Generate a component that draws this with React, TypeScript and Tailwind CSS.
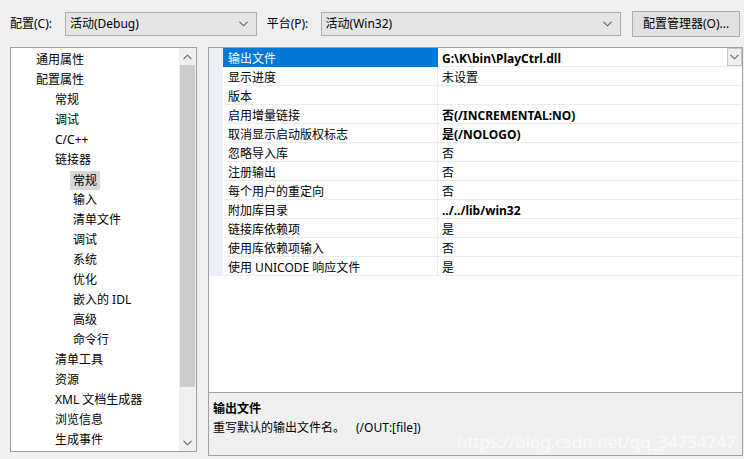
// 链接器 > 常规 属性页（VS 风格）。左侧树 + 右侧属性网格 + 底部说明栏。
import React from "react";

const FONT = { fontFamily: '"Noto Sans", "Noto Sans CJK SC", sans-serif' };

type TreeItem = { label: string; level: 0 | 1 | 2; selected?: boolean };

const tree: TreeItem[] = [
  { label: "通用属性", level: 0 },
  { label: "配置属性", level: 0 },
  { label: "常规", level: 1 },
  { label: "调试", level: 1 },
  { label: "C/C++", level: 1 },
  { label: "链接器", level: 1 },
  { label: "常规", level: 2, selected: true },
  { label: "输入", level: 2 },
  { label: "清单文件", level: 2 },
  { label: "调试", level: 2 },
  { label: "系统", level: 2 },
  { label: "优化", level: 2 },
  { label: "嵌入的 IDL", level: 2 },
  { label: "高级", level: 2 },
  { label: "命令行", level: 2 },
  { label: "清单工具", level: 1 },
  { label: "资源", level: 1 },
  { label: "XML 文档生成器", level: 1 },
  { label: "浏览信息", level: 1 },
  { label: "生成事件", level: 1 },
];

type Prop = { name: string; value: string; bold?: boolean };

const props: Prop[] = [
  { name: "输出文件", value: "G:\\K\\bin\\PlayCtrl.dll", bold: true },
  { name: "显示进度", value: "未设置" },
  { name: "版本", value: "" },
  { name: "启用增量链接", value: "否(/INCREMENTAL:NO)", bold: true },
  { name: "取消显示启动版权标志", value: "是(/NOLOGO)", bold: true },
  { name: "忽略导入库", value: "否" },
  { name: "注册输出", value: "否" },
  { name: "每个用户的重定向", value: "否" },
  { name: "附加库目录", value: "../../lib/win32", bold: true },
  { name: "链接库依赖项", value: "是" },
  { name: "使用库依赖项输入", value: "否" },
  { name: "使用 UNICODE 响应文件", value: "是" },
];

function Chevron({ up = false }: { up?: boolean }) {
  return (
    <svg width="9" height="6" viewBox="0 0 9 6" className={up ? "rotate-180" : ""}>
      <path d="M0.5 0.8 L4.5 4.8 L8.5 0.8" fill="none" stroke="#606060" strokeWidth="1.1" />
    </svg>
  );
}

function Select({ text, width }: { text: string; width: string }) {
  return (
    <div className={`${width} flex h-[24px] items-center justify-between border border-[#adadad] bg-[#e5e5e5] pl-[4px] pr-[8px]`}>
      <span>{text}</span>
      <Chevron />
    </div>
  );
}

export default function App() {
  return (
    <div className="h-[459px] w-[744px] overflow-hidden bg-[#f0f0f0] text-[12px] text-black" style={FONT}>
      {/* 顶部：配置 / 平台 / 配置管理器 */}
      <div className="flex h-[47px] items-center pl-[10px] pr-[4px]">
        <span className="w-[55px]">配置(C):</span>
        <Select text="活动(Debug)" width="w-[192px]" />
        <span className="ml-[10px] w-[54px]">平台(P):</span>
        <Select text="活动(Win32)" width="w-[301px]" />
        <div className="ml-[11px] flex h-[26px] w-[108px] items-center justify-center border border-[#adadad] bg-[#e1e1e1]">
          配置管理器(O)...
        </div>
      </div>

      <div className="flex pl-[10px]">
        {/* 左侧树 */}
        <div className="flex h-[405px] w-[187px] border border-[#a0a0a0] bg-white">
          <div className="flex-1 pt-[2px]">
            {tree.map((t, i) => (
              <div
                key={i}
                className={`flex h-[20px] items-center ${
                  t.level === 0 ? "pl-[22px]" : t.level === 1 ? "pl-[41px]" : "pl-[59px]"
                }`}
              >
                <span className={t.selected ? "bg-[#d9d9d9] px-[3px] leading-[19px]" : "px-[3px]"}>{t.label}</span>
              </div>
            ))}
          </div>
          <div className="flex w-[17px] flex-col bg-[#f0f0f0]">
            <div className="flex h-[17px] items-center justify-center">
              <Chevron up />
            </div>
            <div className="mx-[1px] h-[322px] bg-[#cdcdcd]" />
            <div className="flex-1" />
            <div className="flex h-[17px] items-center justify-center">
              <Chevron />
            </div>
          </div>
        </div>

        {/* 右侧属性网格 */}
        <div className="ml-[11px] flex h-[409px] w-[535px] flex-col border border-[#a0a0a0] bg-white">
          <div className="flex h-[344px] flex-col">
            {props.map((p, i) => (
              <div key={i} className="flex h-[19px]">
                <div className="w-[14px] bg-[#eef0f9]" />
                <div
                  className={`flex w-[215px] items-center border-r border-b pl-[5px] pt-[3px] ${
                    i === 0 ? "border-[#0078d7] bg-[#0078d7] text-white" : "border-[#ececec]"
                  }`}
                >
                  {p.name}
                </div>
                <div className="flex flex-1 items-center border-b border-[#ececec] pl-[4px]">
                  <span className={`flex-1 pt-[3px] ${p.bold ? "font-bold" : ""}`}>{p.value}</span>
                  {i === 0 && (
                    <div className="flex h-[18px] w-[15px] items-center justify-center border border-[#c8c8c8] bg-[#f0f0f0]">
                      <Chevron />
                    </div>
                  )}
                </div>
              </div>
            ))}
          </div>

          {/* 说明栏 */}
          <div className="relative flex-1 border-t border-[#a0a0a0] bg-[#f0f0f0] pl-[4px] pt-[6px] leading-[19px]">
            <div className="font-bold">输出文件</div>
            <div className="flex">
              <span className="w-[143px]">重写默认的输出文件名。</span>
              <span>(/OUT:[file])</span>
            </div>
            <div className="absolute right-[6px] bottom-[4px] text-[17px] text-[#fafafa]">https://blog.csdn.net/qq_34754747</div>
          </div>
        </div>
      </div>
    </div>
  );
}
